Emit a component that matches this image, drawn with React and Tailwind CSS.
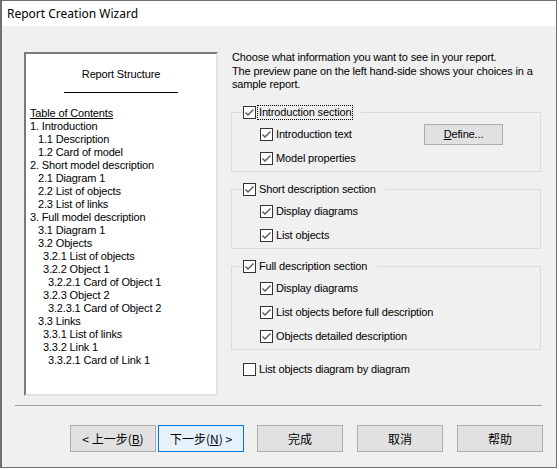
const toc = [
  [0, 'Table of Contents', true],
  [0, '1. Introduction'],
  [1, '1.1 Description'],
  [1, '1.2 Card of model'],
  [0, '2. Short model description'],
  [1, '2.1 Diagram 1'],
  [1, '2.2 List of objects'],
  [1, '2.3 List of links'],
  [0, '3. Full model description'],
  [1, '3.1 Diagram 1'],
  [1, '3.2 Objects'],
  [2, '3.2.1 List of objects'],
  [2, '3.2.2 Object 1'],
  [3, '3.2.2.1 Card of Object 1'],
  [2, '3.2.3 Object 2'],
  [3, '3.2.3.1 Card of Object 2'],
  [1, '3.3 Links'],
  [2, '3.3.1 List of links'],
  [2, '3.3.2 Link 1'],
  [3, '3.3.2.1 Card of Link 1'],
];

const indent = ['pl-0', 'pl-[8px]', 'pl-[13px]', 'pl-[18px]'];

const Box = ({ checked = true }) => (
  <svg width="13" height="13" viewBox="0 0 13 13" className="shrink-0">
    <rect x="0.5" y="0.5" width="12" height="12" fill="#fff" stroke="#333" />
    {checked && <path d="M2.5 6.5 L5 9 L10.5 3.5" fill="none" stroke="#555" strokeWidth="1.4" />}
  </svg>
);

const Check = ({ label, checked = true, focus = false }) => (
  <div className="flex items-center">
    <Box checked={checked} />
    <span className={`ml-[1px] px-[1px] leading-[13px] border border-dotted ${focus ? 'border-black' : 'border-transparent'}`}>
      {label}
    </span>
  </div>
);

const Group = ({ title, focus, children }) => (
  <fieldset className="border border-[#dcdcdc] pl-[11px] pt-[3px]">
    <legend className="h-[15px] flex items-center pr-[8px]">
      <Check label={title} focus={focus} />
    </legend>
    <div className="ml-[17px]">{children}</div>
  </fieldset>
);

const Row = ({ children }) => <div className="h-[24px] flex items-center">{children}</div>;

const Btn = ({ children, focus, className = '' }) => (
  <button
    className={`w-[86px] h-[27px] border text-[12px] ${focus ? 'bg-[#e5f1fb] border-[#0078d7]' : 'bg-[#e1e1e1] border-[#adadad]'} ${className}`}
    style={{ fontFamily: '"Noto Sans CJK SC", "Noto Sans", sans-serif' }}
  >
    {children}
  </button>
);

const App = () => {
  return (
    <div className="w-[559px] h-[470px] bg-white">
      <div
        className="w-[557px] h-[468px] border-t border-b border-l-2 border-r border-[#6f6f6f] bg-[#f0f0f0] text-black"
        style={{ fontFamily: '"Liberation Sans", Arial, sans-serif' }}
      >
        <div className="h-[25px] bg-white flex items-center pl-[5px] text-[12px]" style={{ fontFamily: '"Noto Sans", sans-serif' }}>
          Report Creation Wizard
        </div>

        <div className="flex pl-[22px] pt-[26px] text-[11px] tracking-[-0.15px]">
          <div className="w-[194px] h-[344px] bg-white border-2 border-t-[#7a7a7a] border-l-[#7a7a7a] border-r-[#e3e3e3] border-b-[#e3e3e3] pt-[14px] pl-[4px]">
            <div className="text-center leading-[13px] pr-[4px]">Report Structure</div>
            <div className="w-[114px] h-px bg-black mx-auto mt-[11px] relative left-[-2px]"></div>
            <div className="mt-[14px] leading-[13px]">
              {toc.map(([lvl, text, u], i) => (
                <div key={i} className={`${indent[lvl]} ${u ? 'underline' : ''} whitespace-nowrap`}>{text}</div>
              ))}
            </div>
          </div>

          <div className="ml-[13px] w-[310px]">
            <div className="mt-[-1px] pl-[1px] leading-[13.5px] whitespace-nowrap">
              Choose what information you want to see in your report.<br />
              The preview pane on the left hand-side shows your choices in a<br />
              sample report.
            </div>

            <div className="mt-[13px]">
              <Group title="Introduction section" focus>
                <Row>
                  <div className="w-[164px]"><Check label="Introduction text" /></div>
                  <button className="w-[79px] h-[21px] bg-[#e1e1e1] border border-[#adadad] text-[11px]">
                    <u>D</u>efine...
                  </button>
                </Row>
                <Row><Check label="Model properties" /></Row>
              </Group>
            </div>

            <div className="mt-[10px]">
              <Group title="Short description section">
                <Row><Check label="Display diagrams" /></Row>
                <Row><Check label="List objects" /></Row>
              </Group>
            </div>

            <div className="mt-[10px]">
              <Group title="Full description section">
                <Row><Check label="Display diagrams" /></Row>
                <Row><Check label="List objects before full description" /></Row>
                <Row><Check label="Objects detailed description" /></Row>
              </Group>
            </div>

            <div className="mt-[12px] ml-[12px]">
              <Check label="List objects diagram by diagram" checked={false} />
            </div>
          </div>
        </div>

        <div className="ml-[13px] mt-[9px] w-[527px] h-px bg-[#a0a0a0]"></div>

        <div className="flex pl-[68px] mt-[19px]">
          <Btn>&lt; 上一步(<u>B</u>)</Btn>
          <Btn focus className="ml-[2px]">下一步(<u>N</u>) &gt;</Btn>
          <Btn className="ml-[13px]">完成</Btn>
          <Btn className="ml-[14px]">取消</Btn>
          <Btn className="ml-[14px]">帮助</Btn>
        </div>
      </div>
    </div>
  );
};

export default App;
